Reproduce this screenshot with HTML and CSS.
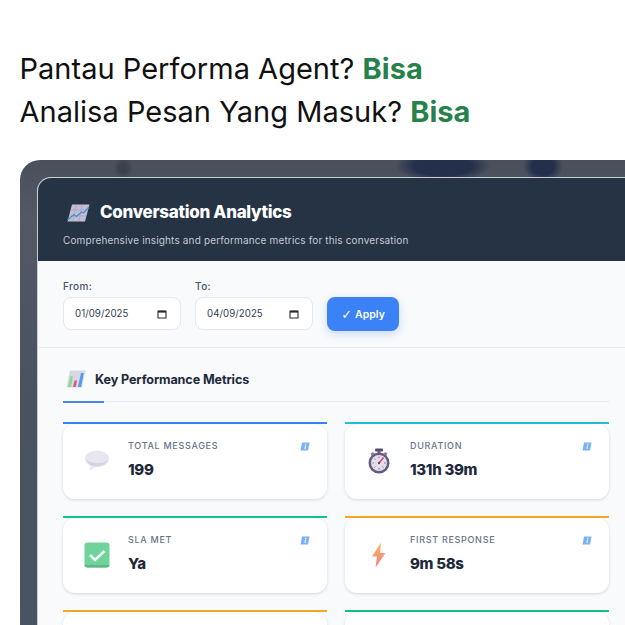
FILE: index.html
```html
<!DOCTYPE html>
<html lang="id">
<head>
<meta charset="utf-8">
<title>Conversation Analytics</title>
<link rel="stylesheet" href="styles.css">
</head>
<body>
<section class="hero">
  <h1 class="headline">Pantau Performa Agent? <strong>Bisa</strong></h1>
  <h1 class="headline">Analisa Pesan Yang Masuk? <strong>Bisa</strong></h1>
</section>
<section class="frame">
  <div class="panel">
    <header class="panel-head">
      <div class="panel-title">
        <svg class="title-icon" viewBox="0 0 24 18"><path d="M6 0.5H23.5L19 17.5H1.5Z" fill="#c3bdd4"/><path d="M4.5 6H21.5M3 12H20M10 1L7 17M16 1L13 17" stroke="#a8a2ba" stroke-width=".7" fill="none"/><path d="M1.5 16L8 10.5L10.5 12.5L15.5 8L17.5 9L23 3" stroke="#3f8fe0" stroke-width="1.3" fill="none"/></svg>
        <h2>Conversation Analytics</h2>
      </div>
      <p>Comprehensive insights and performance metrics for this conversation</p>
    </header>
    <div class="filters">
      <div class="field">
        <label>From:</label>
        <div class="date-box"><span>01/09/2025</span><svg class="cal" viewBox="0 0 10 10"><path d="M1 2.2H9V9H1Z" fill="none" stroke="#2b2b2b" stroke-width="1.1"/><path d="M1 1.5H9V3.6H1Z" fill="#2b2b2b"/></svg></div>
      </div>
      <div class="field">
        <label>To:</label>
        <div class="date-box"><span>04/09/2025</span><svg class="cal" viewBox="0 0 10 10"><path d="M1 2.2H9V9H1Z" fill="none" stroke="#2b2b2b" stroke-width="1.1"/><path d="M1 1.5H9V3.6H1Z" fill="#2b2b2b"/></svg></div>
      </div>
      <button class="apply" type="button"><span class="tick">✓</span>Apply</button>
    </div>
    <div class="metrics">
      <div class="section-title">
        <svg class="section-icon" viewBox="0 0 20 18"><path d="M4 .5H19.5L16 17.5H.5Z" fill="#d9d7e3"/><path d="M2 17L4.5 6H7L5 17Z" fill="#84dc8c"/><path d="M7 17L8.5 10.5H11L9.8 17Z" fill="#e8567f"/><path d="M12 17L15 3H17.8L15 17Z" fill="#4f9ce8"/></svg>
        <h3>Key Performance Metrics</h3>
      </div>
      <div class="tabline"><span></span></div>
      <div class="grid">
        <article class="metric">
          <div class="bar blue"></div>
          <div class="card">
            <svg class="icon" viewBox="0 -1.5 26 26"><path d="M13 1C6.5 1 1 4.6 1 9.3C1 12.6 3.6 15 6.6 16.4C6.6 18 6 19.6 5 20.8C7.5 20.6 9.6 19.2 10.8 17.4C11.6 17.5 12.3 17.6 13 17.6C19.6 17.6 25 13.9 25 9.3C25 4.6 19.6 1 13 1Z" fill="#e9e5f1"/><path d="M13 13.5C8 13.5 4 12 2 9.5C3 14 7.5 17 13 17C18 17 22.5 14 24.5 10C22 12.4 18 13.5 13 13.5Z" fill="#d8d2e4"/></svg>
            <div class="body"><div class="label">TOTAL MESSAGES</div><div class="value">199</div></div>
            <svg class="info" viewBox="0 0 10 9"><path d="M2 .5H9.5L8 8.5H.5Z" fill="#7ab2f3"/><path d="M5 3.6H6.2L5.6 7H4.4ZM5.3 1.7H6.5L6.3 2.9H5.1Z" fill="#e9f3ff"/></svg>
          </div>
        </article>
        <article class="metric">
          <div class="bar cyan"></div>
          <div class="card">
            <svg class="icon" viewBox="0 0 24 26"><rect x="8" y="0.5" width="8" height="3" rx="1" fill="#5a4a72"/><rect x="10.5" y="3" width="3" height="3" fill="#6b5c80"/><path d="M3.5 5.5L6 4L7.5 6L5 8ZM20.5 5.5L18 4L16.5 6L19 8Z" fill="#8c8198"/><circle cx="12" cy="15" r="10.5" fill="#6a5a80"/><circle cx="12" cy="15" r="8" fill="#e4e0ea"/><path d="M12 8.5V10M12 20V21.5M5.5 15H7M17 15H18.5M7.5 10.5L8.5 11.5M16.5 10.5L15.5 11.5M7.5 19.5L8.5 18.5M16.5 19.5L15.5 18.5" stroke="#7f7390" stroke-width="1"/><path d="M12 15L16.5 9.5" stroke="#e8456f" stroke-width="1.6"/><circle cx="12" cy="15" r="1.2" fill="#5f4e75"/></svg>
            <div class="body"><div class="label">DURATION</div><div class="value">131h 39m</div></div>
            <svg class="info" viewBox="0 0 10 9"><path d="M2 .5H9.5L8 8.5H.5Z" fill="#7ab2f3"/><path d="M5 3.6H6.2L5.6 7H4.4ZM5.3 1.7H6.5L6.3 2.9H5.1Z" fill="#e9f3ff"/></svg>
          </div>
        </article>
        <article class="metric">
          <div class="bar green"></div>
          <div class="card">
            <svg class="icon" viewBox="0 0 26 26"><rect x="0.5" y="0.5" width="25" height="25" rx="3" fill="#6fd39b"/><path d="M.5 23C.5 24.5 1.5 25.5 3.5 25.5H22.5C24.5 25.5 25.5 24.5 25.5 23Z" fill="#5cb884"/><path d="M6 13L11 18L20.5 9" fill="none" stroke="#f4faf6" stroke-width="2.6"/></svg>
            <div class="body"><div class="label">SLA MET</div><div class="value">Ya</div></div>
            <svg class="info" viewBox="0 0 10 9"><path d="M2 .5H9.5L8 8.5H.5Z" fill="#7ab2f3"/><path d="M5 3.6H6.2L5.6 7H4.4ZM5.3 1.7H6.5L6.3 2.9H5.1Z" fill="#e9f3ff"/></svg>
          </div>
        </article>
        <article class="metric">
          <div class="bar orange"></div>
          <div class="card">
            <svg class="icon" viewBox="0 0 26 26"><defs><linearGradient id="bolt" x1="0" y1="0" x2="0" y2="1"><stop offset="0" stop-color="#ffb95c"/><stop offset="1" stop-color="#f27a82"/></linearGradient></defs><path d="M15 0.5L6 14.5H11L9.5 25.5L19.5 11H14Z" fill="url(#bolt)"/></svg>
            <div class="body"><div class="label">FIRST RESPONSE</div><div class="value">9m 58s</div></div>
            <svg class="info" viewBox="0 0 10 9"><path d="M2 .5H9.5L8 8.5H.5Z" fill="#7ab2f3"/><path d="M5 3.6H6.2L5.6 7H4.4ZM5.3 1.7H6.5L6.3 2.9H5.1Z" fill="#e9f3ff"/></svg>
          </div>
        </article>
        <article class="metric">
          <div class="bar orange"></div>
          <div class="card"></div>
        </article>
        <article class="metric">
          <div class="bar emerald"></div>
          <div class="card"></div>
        </article>
      </div>
    </div>
  </div>
</section>
</body>
</html>
```
FILE: styles.css
```css
* { box-sizing: border-box; }
html, body { margin: 0; height: 625px; width: 625px; overflow: hidden; background: #fff; }
body { font-family: "Inter", "Liberation Sans", sans-serif; color: #1e293b; }

.hero { padding: 47px 0 0 19.5px; height: 160px; }
.headline { margin: 0; font-size: 29px; line-height: 43px; font-weight: 400; color: #111; letter-spacing: .02px; white-space: nowrap; }
.headline strong { color: #26824a; font-weight: 700; }

.frame {
  margin-left: 20px; width: 605px; height: 465px; padding: 17px 0 0 17px;
  border-radius: 20px 0 0 0;
  overflow: hidden;
  background:
    radial-gradient(ellipse 48px 16px at 423px 6px, #232f4b 60%, transparent 100%),
    radial-gradient(ellipse 20px 16px at 523px 6px, #232f4b 55%, transparent 100%),
    radial-gradient(ellipse 10px 11px at 103px 8px, #3a404c 40%, transparent 100%),
    linear-gradient(180deg, #4a4f5c 0, #535865 12%, #4a5260 50%, #4a5361 100%);
}
.panel { width: 588px; height: 448px; border: 1px solid #c9ced6; border-right: 0; border-bottom: 0; border-radius: 14px 0 0 0; background: #f8fafc; overflow: hidden; }

.panel-head { height: 83px; padding: 22px 25px 0; background: #253345; color: #fff; }
.panel-title { display: flex; align-items: center; gap: 10px; height: 25px; }
.title-icon { width: 24px; height: 18px; margin-left: 3px; }
.panel-title h2 { margin: 0; font-size: 17px; line-height: 25px; font-weight: 800; letter-spacing: -.3px; white-space: nowrap; }
.panel-head p { margin: 7px 0 0; font-size: 10px; line-height: 16px; color: #c4cad3; white-space: nowrap; letter-spacing: .15px; }

.filters { display: flex; align-items: flex-end; height: 87px; padding: 0 25px 17px; gap: 14px; border-bottom: 1px solid #e8edf3; }
.field { display: flex; flex-direction: column; gap: 4px; width: 118px; }
.field label { font-size: 10px; line-height: 14px; font-weight: 500; color: #475569; letter-spacing: .4px; }
.date-box { display: flex; align-items: center; justify-content: space-between; height: 33px; padding: 0 13px 0 11px; border: 1px solid #e2e8f0; border-radius: 8px; background: #fff; font-size: 9.7px; color: #334155; letter-spacing: .05px; }
.cal { width: 10px; height: 10px; }
.apply { display: flex; align-items: center; justify-content: center; gap: 3px; height: 34px; width: 72px; margin-bottom: -1px; border: 0; border-radius: 8px; background: #3b82f6; color: #fff; font: 600 10.5px "Inter", sans-serif; box-shadow: 0 3px 8px rgba(59,130,246,.25); padding: 0; }
.tick { font-family: "DejaVu Sans", sans-serif; font-size: 13px; font-weight: 400; line-height: 1; }

.metrics { padding: 0 16px 0 25px; }
.section-title { display: flex; align-items: center; gap: 9px; height: 53px; padding-top: 11px; }
.section-icon { width: 20px; height: 18px; margin-left: 3px; margin-top: -2px; }
.section-title h3 { margin: 0; font-size: 12.6px; line-height: 18px; font-weight: 700; color: #1e293b; letter-spacing: -.1px; white-space: nowrap; }
.tabline { height: 1px; background: #e2e8f0; }
.tabline span { display: block; width: 41px; height: 2px; background: #4a86e8; }

.grid { display: grid; grid-template-columns: 264px 264px; column-gap: 18px; row-gap: 17px; grid-auto-rows: 77px; margin-top: 20px; width: 546px; }
.metric { display: flex; flex-direction: column; }
.bar { height: 2px; flex: none; }
.bar.blue { background: #3b82f6; }
.bar.cyan { background: #22c0d8; }
.bar.green { background: #10c48e; }
.bar.orange { background: #f7a823; }
.bar.emerald { background: #10c080; }
.card { flex: 1; display: flex; align-items: flex-start; padding: 15px 17px 0 21px; background: #fff; border-radius: 12px; box-shadow: 0 1px 3px rgba(30,41,59,.16); }
.icon { width: 26px; height: 26px; margin-top: 9px; flex: none; }
.body { margin-left: 18px; flex: 1; }
.label { font-size: 9px; line-height: 14px; font-weight: 500; color: #64748b; letter-spacing: .7px; }
.value { margin-top: 7px; font-size: 15px; line-height: 20px; font-weight: 800; color: #1e293b; letter-spacing: -.3px; }
.info { width: 10px; height: 9px; margin-top: 3px; flex: none; }
```
